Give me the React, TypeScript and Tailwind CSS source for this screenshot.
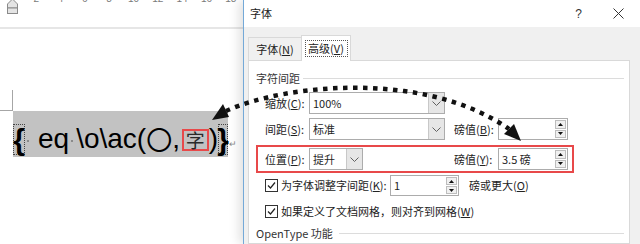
import React from "react";

const ui = "font-['Noto_Sans_CJK_SC','Noto_Sans',sans-serif]";

const Chevron = () => (
  <svg width="9" height="5" viewBox="0 0 9 5">
    <polyline points="0.5,0.5 4.5,4.5 8.5,0.5" fill="none" stroke="#606060" strokeWidth="1" />
  </svg>
);

const Combo = ({ value, width }: { value: string; width: string }) => (
  <div className={`flex h-[22px] border border-[#acacac] bg-white ${width}`}>
    <div className="flex flex-1 items-center pl-[3px] text-[11px] text-[#1e1e1e]">{value}</div>
    <div className="flex w-[16px] items-center justify-center border-l border-[#c8c8c8] bg-[#e6e6e6]">
      <Chevron />
    </div>
  </div>
);

const Tri = ({ up }: { up?: boolean }) => (
  <svg width="5" height="3" viewBox="0 0 5 3">
    <polygon points={up ? "2.5,0 5,3 0,3" : "0,0 5,0 2.5,3"} fill="#111" />
  </svg>
);

const Spin = ({ value, width, h = "h-[22px]" }: { value: string; width: string; h?: string }) => (
  <div className={`flex border border-[#acacac] bg-white ${width} ${h}`}>
    <div className="flex flex-1 items-center pl-[3px] text-[11px] text-[#1e1e1e]">{value}</div>
    <div className="flex w-[13px] flex-col gap-px p-px">
      <div className="flex flex-1 items-center justify-center border border-[#bdbdbd] bg-[#f0f0f0]">
        <Tri up />
      </div>
      <div className="flex flex-1 items-center justify-center border border-[#bdbdbd] bg-[#f0f0f0]">
        <Tri />
      </div>
    </div>
  </div>
);

const Check = () => (
  <div className="flex h-[13px] w-[13px] items-center justify-center border border-[#333] bg-white">
    <svg width="11" height="11" viewBox="0 0 11 11">
      <path d="M2 5.5 L4.5 8 L9 2.5" fill="none" stroke="#222" strokeWidth="1.2" />
    </svg>
  </div>
);

const Label = ({ text, k, w = "w-[44px]" }: { text: string; k: string; w?: string }) => (
  <span className={`${w} shrink-0 text-[11px] text-[#222]`}>
    {text}(<span className="underline">{k}</span>):
  </span>
);

const rulerNums = ["2", "4", "6", "8", "10", "12", "14", "16", "18"];

export default function App() {
  return (
    <div className={`relative flex h-[244px] w-[640px] overflow-hidden bg-white ${ui}`}>
      {/* word document */}
      <div className="flex w-[243px] shrink-0 flex-col bg-white">
        <div className="relative h-[27px]">
          <div className="-mt-[6px] ml-[24px] flex text-[10px] leading-[10px] text-[#7a7a7a] font-['Liberation_Sans',sans-serif]">
            {rulerNums.map((n) => (
              <span key={n} className="w-[24.4px] text-center">
                {n}
              </span>
            ))}
          </div>
          <svg className="absolute left-[7px] top-0" width="11" height="14" viewBox="0 0 11 14">
            <polygon points="0.5,4 5.5,-1 10.5,4 10.5,8 0.5,8" fill="#e4e4e4" stroke="#8a8a8a" />
            <rect x="0.5" y="8" width="10" height="5.5" fill="#e4e4e4" stroke="#8a8a8a" />
          </svg>
        </div>
        <div className="h-[2px] bg-[#e6e6e6]" />
        <div className="mt-[61px] h-[21px] w-[13px] border-b border-r border-[#a6a6a6]" />
        <div className="flex items-start">
          <div className="ml-[13px] flex h-[46px] w-[215px] items-start bg-[#c2c2c2] text-black">
            <div className="mt-[13px] flex h-[31px] w-[12px] items-center justify-center border border-dotted border-[#444] text-[30px] font-bold leading-[29px] font-['Liberation_Sans',sans-serif]">
              {"{"}
            </div>
            <span className="ml-[2px] mt-[29px] h-[2px] w-[2px] bg-[#8a8a8a]" />
            <span className="ml-[9px] mt-[12px] text-[28px] leading-[32px] font-['Liberation_Sans',sans-serif]">eq</span>
            <span className="ml-[2px] mt-[29px] h-[2px] w-[2px] bg-[#8a8a8a]" />
            <span className="ml-[3px] mt-[12px] text-[28px] leading-[32px] font-['Liberation_Sans',sans-serif]">
              {"\\o\\ac("}
            </span>
            <span className="mt-[12px] text-[26px] leading-[32px] font-['Noto_Sans_CJK_SC',sans-serif]">〇</span>
            <span className="mt-[12px] text-[28px] leading-[32px] font-['Liberation_Sans',sans-serif]">,</span>
            <span className="ml-[2px] mt-[18px] flex h-[22px] w-[27px] items-center justify-center border-2 border-[#e8494a] text-[19px] leading-[18px] text-[#2a2a2a] font-['Noto_Sans_CJK_SC',sans-serif]">
              字
            </span>
            <span className="mt-[12px] text-[28px] leading-[32px] font-['Liberation_Sans',sans-serif]">)</span>
            <div className="mt-[13px] flex h-[31px] w-[10px] items-center justify-center border border-dotted border-[#444] text-[30px] font-bold leading-[29px] font-['Liberation_Sans',sans-serif]">
              {"}"}
            </div>
          </div>
          <span className="ml-[1px] mt-[28px] text-[9px] leading-[9px] text-[#888]">↵</span>
        </div>
      </div>

      {/* font dialog */}
      <div className="flex flex-1 flex-col border-l border-[#74a9d8] shadow-[-4px_0_10px_rgba(0,0,0,0.12)]">
        <div className="flex h-[27px] shrink-0 items-center bg-white pl-[6px] pr-[16px]">
          <span className="text-[11px] text-[#1a1a1a]">字体</span>
          <span className="ml-auto text-[12px] text-[#333] font-['Liberation_Sans',sans-serif]">?</span>
          <svg className="ml-[31px]" width="11" height="11" viewBox="0 0 11 11">
            <path d="M0.5 0.5 L10.5 10.5 M10.5 0.5 L0.5 10.5" stroke="#333" strokeWidth="1" />
          </svg>
        </div>
        <div className="flex flex-1 flex-col bg-[#f0f0f0] pl-[4px] pr-[10px]">
          <div className="flex h-[33px] shrink-0 items-end">
            <div className="flex h-[23px] w-[54px] items-center justify-center border border-b-0 border-[#d9d9d9] bg-[#f0f0f0] text-[11px] text-[#222]">
              字体(<span className="underline">N</span>)
            </div>
            <div className="relative z-10 -mb-px -ml-px flex h-[26px] w-[50px] items-center justify-center border border-b-0 border-[#d9d9d9] bg-white pb-px">
              <div className="flex h-[17px] w-[43px] items-center justify-center border border-dotted border-[#555] text-[11px] text-[#222]">
                高级(<span className="underline">V</span>)
              </div>
            </div>
          </div>
          <div className="flex flex-1 flex-col border border-[#d9d9d9] bg-white pl-[7px]">
            <div className="mt-[9px] flex h-[16px] items-center text-[11px] text-[#333]">
              <span>字符间距</span>
              <div className="ml-[3px] mr-[5px] h-px flex-1 bg-[#dcdcdc]" />
            </div>
            <div className="mt-[6px] flex items-center pl-[9px]">
              <Label text="缩放" k="C" />
              <Combo value="100%" width="w-[136px]" />
            </div>
            <div className="mt-[4px] flex items-center pl-[9px]">
              <Label text="间距" k="S" />
              <Combo value="标准" width="w-[136px]" />
              <span className="ml-[9px]" />
              <Label text="磅值" k="B" />
              <Spin value="" width="w-[70px]" />
            </div>
            <div className="mt-[5px] flex h-[28px] w-[318px] items-center border-2 border-[#e8494a] pl-[7px]">
              <Label text="位置" k="P" />
              <Combo value="提升" width="w-[54px]" />
              <span className="ml-[91px]" />
              <Label text="磅值" k="Y" />
              <Spin value="3.5 磅" width="w-[70px]" />
            </div>
            <div className="mt-[2px] flex h-[21px] items-center pl-[9px]">
              <Check />
              <span className="ml-[3px] w-[109px] text-[11px] text-[#222]">
                为字体调整字间距(<span className="underline">K</span>):
              </span>
              <Spin value="1" width="w-[69px]" h="h-[21px]" />
              <span className="ml-[10px] text-[11px] text-[#222]">
                磅或更大(<span className="underline">O</span>)
              </span>
            </div>
            <div className="mt-[7px] flex h-[16px] items-center pl-[9px]">
              <Check />
              <span className="ml-[3px] text-[11px] text-[#222]">
                如果定义了文档网格，则对齐到网格(<span className="underline">W</span>)
              </span>
            </div>
            <div className="mt-[6px] flex h-[16px] items-center text-[11px] text-[#333]">
              <span>OpenType 功能</span>
              <div className="ml-[6px] mr-[5px] h-px flex-1 bg-[#dcdcdc]" />
            </div>
          </div>
        </div>
      </div>

      {/* dotted arrow overlay */}
      <svg className="pointer-events-none absolute left-0 top-0 z-20" width="640" height="244" viewBox="0 0 640 244">
        <path
          d="M226 111 C 285 84, 425 70, 509 129"
          fill="none"
          stroke="#111"
          strokeWidth="4.5"
          strokeDasharray="4.5 5.5"
        />
        <polygon points="212,120 229,117 223,104" fill="#111" />
        <polygon points="521,141 504,134 514,124" fill="#111" />
      </svg>
    </div>
  );
}
